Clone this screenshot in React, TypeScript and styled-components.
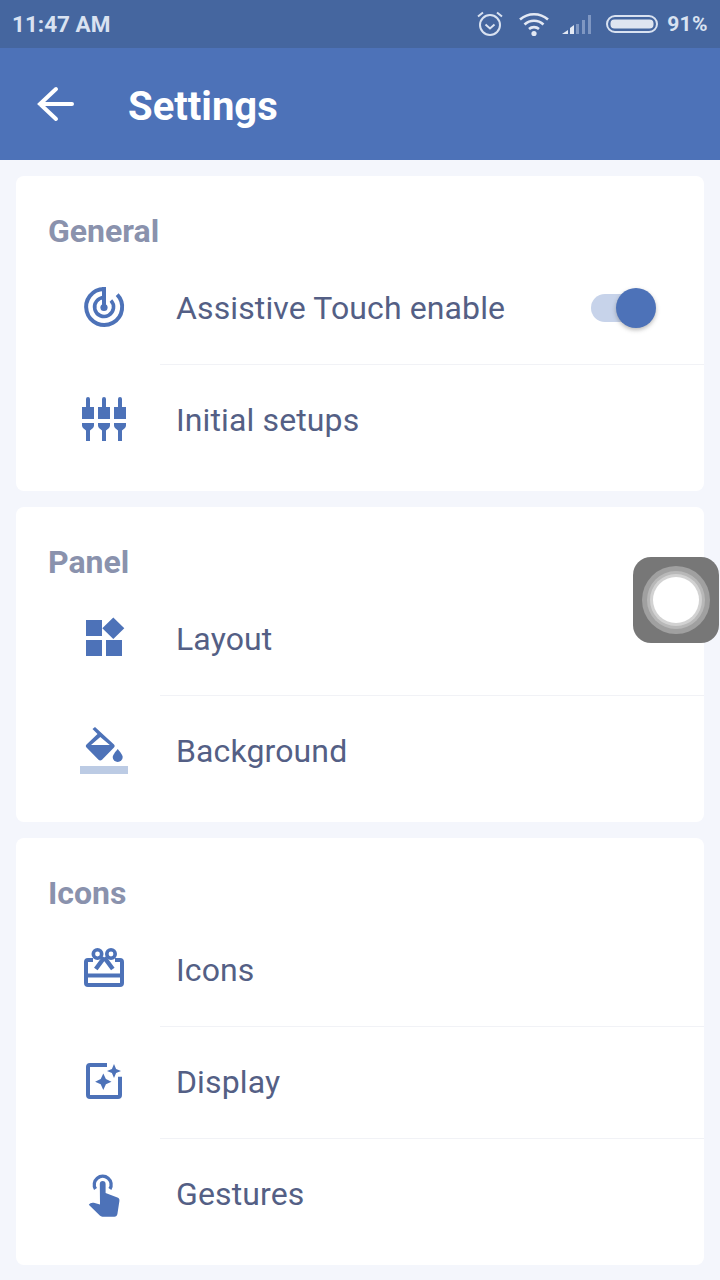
import styled, { createGlobalStyle } from 'styled-components';
import type { ReactNode } from 'react';

const GlobalStyle = createGlobalStyle`
  html, body {
    margin: 0;
    padding: 0;
    background: #f4f6fc;
    font-family: Roboto, "Liberation Sans", sans-serif;
  }
`;

const BLUE = '#4d72b8';

const Page = styled.div`
  position: relative;
  width: 720px;
  height: 1280px;
  overflow: hidden;
  background: #f4f6fc;
`;

const StatusBar = styled.div`
  height: 48px;
  display: flex;
  align-items: center;
  padding: 0 12px 0 12px;
  background: #45669f;
  color: #d9e2f1;
  font-size: 22.5px;
  font-weight: 700;
`;

const StatusRight = styled.div`
  margin-left: auto;
  display: flex;
  align-items: center;
`;

const Percent = styled.span`
  margin-left: 9px;
  font-size: 21px;
  letter-spacing: 0.4px;
`;

const Header = styled.header`
  height: 112px;
  display: flex;
  align-items: center;
  background: ${BLUE};
  padding-left: 36px;
`;

const Title = styled.h1`
  margin: 4px 0 0 54px;
  font-size: 40px;
  font-weight: 700;
  color: #fff;
`;

const Content = styled.main`
  display: flex;
  flex-direction: column;
  gap: 16px;
  padding: 16px;
`;

const Card = styled.section`
  background: #fff;
  border-radius: 8px;
  padding-bottom: 15px;
`;

const Heading = styled.h2`
  height: 77px;
  box-sizing: border-box;
  margin: 0;
  padding: 37px 0 0 32px;
  font-size: 32px;
  line-height: 36px;
  font-weight: 700;
  color: #8a92ad;
`;

const Row = styled.div`
  height: 111px;
  box-sizing: border-box;
  display: flex;
  align-items: center;
  padding: 0 48px 1px 64px;
`;

const IconBox = styled.svg`
  width: 48px;
  height: 48px;
  flex: none;
  margin-right: 48px;
  fill: ${BLUE};
`;

const Label = styled.span`
  font-size: 32px;
  color: #545f85;
  letter-spacing: 0.12px;
  margin-top: -1px;
`;

const Divider = styled.div`
  height: 1px;
  margin-left: 144px;
  background: #f1f2f6;
`;

const Toggle = styled.div`
  position: relative;
  margin: -1px 0 0 auto;
  width: 65px;
  height: 28px;
`;

const Track = styled.div`
  width: 55px;
  height: 28px;
  border-radius: 14px;
  background: #c7d3ea;
`;

const Knob = styled.div`
  position: absolute;
  top: -6px;
  right: 0;
  width: 40px;
  height: 40px;
  border-radius: 50%;
  background: ${BLUE};
  box-shadow: 0 2px 4px rgba(60, 60, 60, 0.35);
`;

const FloatingTouch = styled.div`
  position: absolute;
  left: 633px;
  top: 557px;
  width: 86px;
  height: 86px;
  border-radius: 18px;
  background: #777777;
  display: flex;
  align-items: center;
  justify-content: center;
`;

const TouchRing = styled.div<{ $size: number; $color: string }>`
  width: ${(p) => p.$size}px;
  height: ${(p) => p.$size}px;
  border-radius: 50%;
  background: ${(p) => p.$color};
  display: flex;
  align-items: center;
  justify-content: center;
`;

const RadarIcon = () => (
  <IconBox viewBox="0 0 48 48">
    <path d="M24 5a18 18 0 1 0 13.2 5.6" fill="none" stroke={BLUE} strokeWidth="4" />
    <path d="M24 13.5a9.5 9.5 0 1 0 6.9 2.9" fill="none" stroke={BLUE} strokeWidth="3.6" />
    <path d="M22 3h4v20h-4z" />
    <circle cx="24" cy="23.5" r="3.6" />
  </IconBox>
);

const SlidersIcon = () => (
  <IconBox viewBox="0 0 48 48">
    {[8, 24, 40].map((x) => (
      <path
        key={x}
        d={`M${x - 2} 3a2 2 0 0 1 4 0v8h4v12h-12v-12h4zM${x - 6} 27h12v2.500c0 2-2 3.500-4 5v10.500h-4v-10.500c-2-1.500-4-3-4-5z`}
      />
    ))}
  </IconBox>
);

const LayoutIcon = () => (
  <IconBox viewBox="0 0 48 48">
    <path d="M6 5h16v16h-16zM6 25h16v16h-16zM26 25h16v16h-16zM33.3 2.5l11 10.8-11 10.8-11-10.8z" />
  </IconBox>
);

const BucketIcon = () => (
  <IconBox viewBox="0 0 48 48">
    <path
      fillRule="evenodd"
      d="M15 0l19 17.5c.9.9.9 2.1 0 3l-12 12.2c-1 1-2.600 1-3.500 0l-12-12.200c-.9-.9-.9-2.100 0-3l11-10.500-5-5zM20.300 10l-9.300 8h18.800z"
    />
    <path d="M37.700 22s-5 5.600-5 8a5 5 0 0 0 10 0c0-2.400-5-8-5-8z" />
    <path d="M0 39h48v8h-48z" fill="#bccbe4" />
  </IconBox>
);

const GiftIcon = () => (
  <IconBox viewBox="0 0 48 48">
    <path
      d="M13 14h-5a2 2 0 0 0-2 2v21a2 2 0 0 0 2 2h32a2 2 0 0 0 2-2v-21a2 2 0 0 0-2-2h-5M6 29.500h36"
      fill="none"
      stroke={BLUE}
      strokeWidth="4"
    />
    <circle cx="17.500" cy="8" r="4.200" fill="none" stroke={BLUE} strokeWidth="3.600" />
    <circle cx="31" cy="8" r="4.200" fill="none" stroke={BLUE} strokeWidth="3.600" />
    <path d="M24.300 11.500l-8.500 11.500M24.300 11.500l8.500 11.500" fill="none" stroke={BLUE} strokeWidth="4.400" />
  </IconBox>
);

const DisplayIcon = () => (
  <IconBox viewBox="0 0 48 48">
    <path
      d="M27 7h-17a2 2 0 0 0-2 2v28a2 2 0 0 0 2 2h28a2 2 0 0 0 2-2v-18.300"
      fill="none"
      stroke={BLUE}
      strokeWidth="4"
    />
    <path d="M23.300 15.500l2.600 5.600 5.600 2.600-5.600 2.600-2.600 5.600-2.600-5.600-5.600-2.600 5.600-2.600z" />
    <path d="M34 6l2.100 4.900 4.900 2.100-4.900 2.100-2.100 4.900-2.100-4.900-4.900-2.100 4.900-2.100z" />
  </IconBox>
);

const HandIcon = () => (
  <IconBox viewBox="0 0 48 48">
    <path d="M15.500 19a8.400 8.400 0 1 1 14.400 0" fill="none" stroke={BLUE} strokeWidth="3.400" />
    <path d="M19.800 14a2.900 2.900 0 0 1 5.800 0v9l11.800 4.500c1.600.7 2.300 1.800 2 3.500l-2 13c-.3 1.600-1.300 2.700-3 2.700h-12c-1 0-1.900-.4-2.600-1.100l-11-10.900c1-1.500 3-2.400 5-1.900l6.200 1.700z" />
  </IconBox>
);

const BackArrow = () => (
  <svg width="38" height="36" viewBox="0 0 38 36" fill="none" stroke="#fff" strokeWidth="4" strokeLinecap="round">
    <path d="M36 18h-32M20 3l-16 15 16 15" />
  </svg>
);

const AlarmIcon = () => (
  <svg width="28" height="28" viewBox="0 0 28 28" fill="none" stroke="#d9e2f1" strokeWidth="2" style={{ marginRight: 14 }}>
    <circle cx="14" cy="15" r="10" />
    <path d="M9.500 14.500l4.500 4 4.500-4M2 6.500l5-4M26 6.500l-5-4" />
  </svg>
);

const WifiIcon = () => (
  <svg width="32" height="26" viewBox="0 0 32 26" fill="none" stroke="#e3e9f4" strokeWidth="2.600" style={{ marginRight: 12 }}>
    <path d="M2 8.500c8-7 20-7 28 0M6.500 13.500c5.500-5 13.500-5 19 0M11 18c2.800-2.500 7.200-2.500 10 0" />
    <circle cx="16" cy="22.500" r="2.600" fill="#e3e9f4" stroke="none" />
  </svg>
);

const SignalIcon = () => (
  <svg width="30" height="20" viewBox="0 0 30 20" style={{ marginRight: 14 }}>
    <path d="M0 20l6-4v4z" fill="#e3e9f4" />
    <path d="M8 14l4-3v9h-4z" fill="#e3e9f4" />
    <path d="M14 10h3v10h-3zM20 6h3v14h-3zM26 1h3v19h-3z" fill="#7f97c2" />
  </svg>
);

const BatteryIcon = () => (
  <svg width="52" height="18" viewBox="0 0 52 18">
    <rect x="1" y="1" width="50" height="16" rx="8" fill="none" stroke="#d9e2f1" strokeWidth="2" />
    <rect x="4.500" y="4.500" width="43" height="9" rx="4" fill="#dfe5f0" />
  </svg>
);

const Section = ({ title, children }: { title: string; children: ReactNode }) => (
  <Card>
    <Heading>{title}</Heading>
    {children}
  </Card>
);

export default function App() {
  return (
    <Page>
      <GlobalStyle />
      <StatusBar>
        <span>11:47 AM</span>
        <StatusRight>
          <AlarmIcon />
          <WifiIcon />
          <SignalIcon />
          <BatteryIcon />
          <Percent>91%</Percent>
        </StatusRight>
      </StatusBar>
      <Header>
        <BackArrow />
        <Title>Settings</Title>
      </Header>
      <Content>
        <Section title="General">
          <Row>
            <RadarIcon />
            <Label>Assistive Touch enable</Label>
            <Toggle>
              <Track />
              <Knob />
            </Toggle>
          </Row>
          <Divider />
          <Row>
            <SlidersIcon />
            <Label>Initial setups</Label>
          </Row>
        </Section>
        <Section title="Panel">
          <Row>
            <LayoutIcon />
            <Label>Layout</Label>
          </Row>
          <Divider />
          <Row>
            <BucketIcon />
            <Label>Background</Label>
          </Row>
        </Section>
        <Section title="Icons">
          <Row>
            <GiftIcon />
            <Label>Icons</Label>
          </Row>
          <Divider />
          <Row>
            <DisplayIcon />
            <Label>Display</Label>
          </Row>
          <Divider />
          <Row>
            <HandIcon />
            <Label>Gestures</Label>
          </Row>
        </Section>
      </Content>
      <FloatingTouch>
        <TouchRing $size={68} $color="#a0a0a0">
          <TouchRing $size={58} $color="#b8b8b8">
            <TouchRing $size={52} $color="#d2d2d2">
              <TouchRing $size={46} $color="#ffffff" />
            </TouchRing>
          </TouchRing>
        </TouchRing>
      </FloatingTouch>
    </Page>
  );
}
